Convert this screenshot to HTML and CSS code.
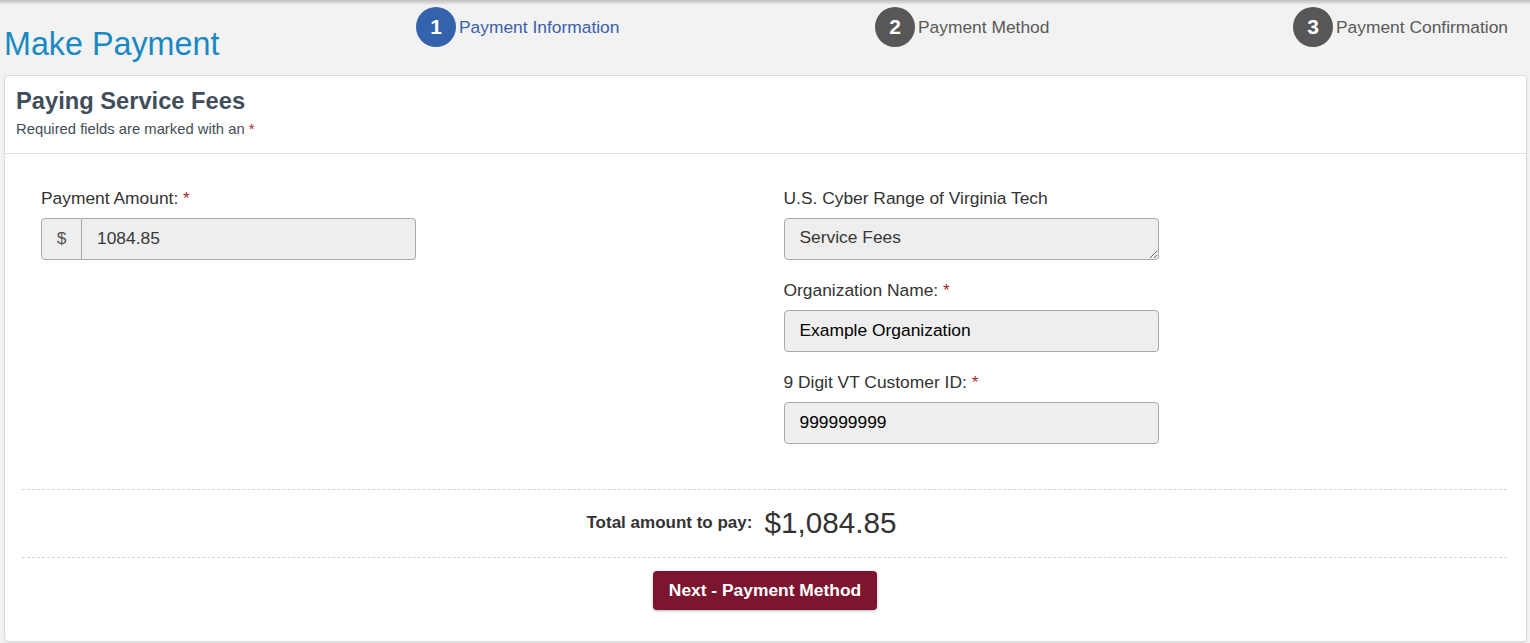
FILE: index.html
```html
<!DOCTYPE html>
<html lang="en">
<head>
<meta charset="utf-8">
<title>Make Payment</title>
<link rel="stylesheet" href="styles.css">
</head>
<body>
<div class="topshade"></div>
<header class="header">
  <h1 class="title">Make Payment</h1>
  <ol class="steps">
    <li class="step active"><span class="num">1</span><span class="step-label">Payment Information</span></li>
    <li class="step"><span class="num">2</span><span class="step-label">Payment Method</span></li>
    <li class="step"><span class="num">3</span><span class="step-label">Payment Confirmation</span></li>
  </ol>
</header>
<main class="card">
  <div class="card-head">
    <h2 class="card-title">Paying Service Fees</h2>
    <p class="card-sub">Required fields are marked with an <span class="req">*</span></p>
  </div>
  <div class="card-body">
    <div class="fields">
      <div class="col">
        <div class="form-group">
          <label class="label">Payment Amount: <span class="req">*</span></label>
          <div class="input-group">
            <span class="addon">$</span>
            <input class="input grouped muted" type="text" value="1084.85" readonly>
          </div>
        </div>
      </div>
      <div class="col">
        <div class="form-group">
          <label class="label">U.S. Cyber Range of Virginia Tech</label>
          <textarea class="input textarea muted" readonly>Service Fees</textarea>
        </div>
        <div class="form-group">
          <label class="label">Organization Name: <span class="req">*</span></label>
          <input class="input" type="text" value="Example Organization">
        </div>
        <div class="form-group">
          <label class="label">9 Digit VT Customer ID: <span class="req">*</span></label>
          <input class="input" type="text" value="999999999">
        </div>
      </div>
    </div>
    <div class="totals">
      <span class="total-label">Total amount to pay:</span>
      <span class="total-value">$1,084.85</span>
    </div>
    <div class="actions">
      <button class="btn" type="button">Next - Payment Method</button>
    </div>
  </div>
</main>
</body>
</html>
```

FILE: styles.css
```css
* { box-sizing: border-box; }

html, body {
  margin: 0;
  padding: 0;
}

body {
  background: #f2f2f2;
  font-family: "Liberation Sans", Arial, sans-serif;
  color: #333;
  width: 1530px;
  height: 643px;
  overflow: hidden;
  position: relative;
}

.topshade {
  position: absolute;
  left: 0;
  top: 0;
  width: 100%;
  height: 5px;
  background: linear-gradient(to bottom, rgba(0,0,0,0.22), rgba(0,0,0,0));
  pointer-events: none;
}

.header {
  display: flex;
  align-items: flex-start;
  height: 75px;
  padding-top: 7px;
}

.title {
  flex: none;
  width: 416px;
  margin: 20px 0 0 0;
  padding-left: 4px;
  font-size: 32.3px;
  line-height: 35px;
  font-weight: normal;
  color: #1a88c2;
}

.steps {
  display: grid;
  grid-template-columns: 459px 418px auto;
  margin: 0;
  padding: 0;
  list-style: none;
}

.step {
  display: flex;
  align-items: center;
  gap: 3px;
  height: 40px;
}

.num {
  flex: none;
  width: 40px;
  height: 40px;
  border-radius: 50%;
  background: #575757;
  color: #fff;
  font-weight: bold;
  font-size: 21px;
  display: flex;
  align-items: center;
  justify-content: center;
}

.step-label {
  font-size: 17.4px;
  color: #595959;
}

.step.active .num { background: #3462ac; }
.step.active .step-label { color: #3a60aa; }

.card {
  margin: 0 3px 0 4px;
  background: #fff;
  border: 1px solid #dcdcdc;
  border-radius: 4px;
  box-shadow: 0 1px 2px rgba(0,0,0,0.08);
}

.card-head {
  padding: 13px 11px 13px 11px;
  border-bottom: 1px solid #e3e3e3;
}

.card-title {
  margin: 0;
  font-size: 23.7px;
  line-height: 25.85px;
  font-weight: bold;
  color: #3f4e5a;
}

.card-sub {
  margin: 4px 0 0 0;
  font-size: 14.8px;
  line-height: 21.1px;
  color: #444d56;
}

.req { color: #a3262b; }

.card-body {
  padding: 32px 19px 31px 17px;
}

.fields {
  display: grid;
  grid-template-columns: 1fr 1fr;
}

.col {
  padding-left: 19px;
}

.form-group {
  margin-bottom: 18px;
}

.label {
  display: block;
  font-size: 17.4px;
  line-height: 25px;
  margin-bottom: 7px;
  color: #333;
}

.input-group {
  display: flex;
  width: 375px;
  height: 42px;
}

.addon {
  flex: none;
  width: 41px;
  display: flex;
  align-items: center;
  justify-content: center;
  background: #eee;
  border: 1px solid #a9a9a9;
  border-radius: 4px 0 0 4px;
  font-size: 17.4px;
  color: #555;
}

.input {
  display: block;
  width: 375px;
  height: 42px;
  margin: 0;
  padding: 0 15px;
  background: #eeeeee;
  border: 1px solid #a9a9a9;
  border-radius: 4px;
  font-family: "Liberation Sans", Arial, sans-serif;
  font-size: 17.4px;
  color: #000;
  outline: none;
}

.input.grouped {
  flex: 1;
  width: auto;
  border-left: none;
  border-radius: 0 4px 4px 0;
}

.input.muted { color: #383838; }

.textarea {
  padding: 6px 15px;
  line-height: 24px;
  resize: vertical;
  overflow: hidden;
  min-height: 42px;
}

.totals {
  display: flex;
  align-items: center;
  justify-content: center;
  gap: 12px;
  height: 69px;
  margin-top: 27px;
  padding-right: 46px;
  border-top: 1px dashed #d6d6d6;
  border-bottom: 1px dashed #d6d6d6;
}

.total-label {
  font-size: 17px;
  font-weight: bold;
  color: #333;
}

.total-value {
  font-size: 29.7px;
  color: #333;
}

.actions {
  display: flex;
  justify-content: center;
  margin-top: 13px;
  padding-left: 1px;
}

.btn {
  background: #7b1530;
  color: #fff;
  border: none;
  border-radius: 4px;
  padding: 7px 16px;
  font-family: "Liberation Sans", Arial, sans-serif;
  font-size: 17.4px;
  line-height: 25px;
  font-weight: bold;
  box-shadow: 0 1px 3px rgba(0,0,0,0.3);
  cursor: pointer;
}
```
